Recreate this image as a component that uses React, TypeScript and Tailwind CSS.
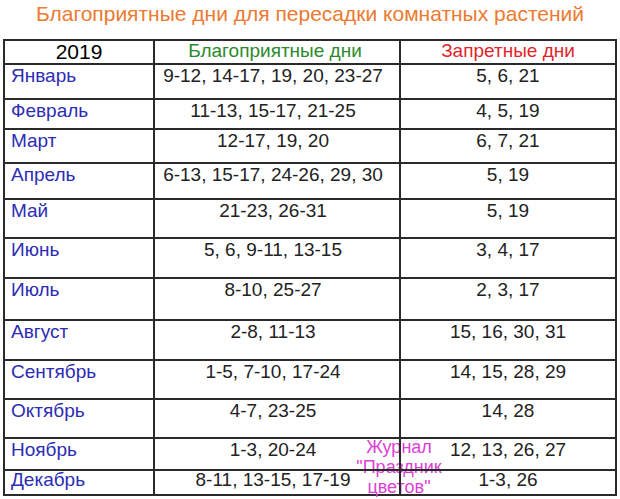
import React from "react";

type Row = { m: string; good: string; bad: string; h: string };

const rows: Row[] = [
  { m: "Январь", good: "9-12, 14-17, 19, 20, 23-27", bad: "5, 6, 21", h: "h-[35px]" },
  { m: "Февраль", good: "11-13, 15-17, 21-25", bad: "4, 5, 19", h: "h-[30px]" },
  { m: "Март", good: "12-17, 19, 20", bad: "6, 7, 21", h: "h-[34px]" },
  { m: "Апрель", good: "6-13, 15-17, 24-26, 29, 30", bad: "5, 19", h: "h-[36px]" },
  { m: "Май", good: "21-23, 26-31", bad: "5, 19", h: "h-[39px]" },
  { m: "Июнь", good: "5, 6, 9-11, 13-15", bad: "3, 4, 17", h: "h-[40px]" },
  { m: "Июль", good: "8-10, 25-27", bad: "2, 3, 17", h: "h-[42px]" },
  { m: "Август", good: "2-8, 11-13", bad: "15, 16, 30, 31", h: "h-[40px]" },
  { m: "Сентябрь", good: "1-5, 7-10, 17-24", bad: "14, 15, 28, 29", h: "h-[39px]" },
  { m: "Октябрь", good: "4-7, 23-25", bad: "14, 28", h: "h-[39px]" },
  { m: "Ноябрь", good: "1-3, 20-24", bad: "12, 13, 26, 27", h: "h-[32px]" },
];

export default function App() {
  return (
    <div
      className="w-[620px] h-[499px] bg-white overflow-hidden"
      style={{ fontFamily: '"Liberation Sans", Arial, sans-serif' }}
    >
      <div className="h-[39px] pt-[2px] text-center text-[21px] leading-[24px] text-[#ec7a30]">
        Благоприятные дни для пересадки комнатных растений
      </div>
      <div className="relative isolate ml-[3px] w-[614px] border-2 border-[#2a2a2a]">
        <div className="flex h-[24px] border-b-2 border-[#2a2a2a]">
          <div className="w-[150px] border-r-2 border-[#2a2a2a] text-center text-[21px] leading-[22px] text-black">
            2019
          </div>
          <div className="w-[246px] border-r-2 border-[#2a2a2a] pr-[4px] text-center text-[19px] leading-[20px] text-[#2b8a2b]">
            Благоприятные дни
          </div>
          <div className="w-[214px] text-center text-[19px] leading-[20px] text-[#e0262a]">
            Запретные дни
          </div>
        </div>
        {rows.map((r) => (
          <div key={r.m} className={`flex ${r.h} border-b-2 border-[#2a2a2a] text-[19px] leading-[22px]`}>
            <div className="w-[150px] border-r-2 border-[#2a2a2a] pl-[6px] text-[#2c2cb4]">{r.m}</div>
            <div className="w-[246px] border-r-2 border-[#2a2a2a] pr-[8px] text-center text-[#222]">{r.good}</div>
            <div className="w-[214px] text-center text-[#222]">{r.bad}</div>
          </div>
        ))}
        <div className="flex h-[23px] text-[19px] leading-[18px]">
          <div className="w-[150px] border-r-2 border-[#2a2a2a] pl-[6px] text-[#2c2cb4]">Декабрь</div>
          <div className="w-[246px] border-r-2 border-[#2a2a2a] pr-[8px] text-center text-[#222]">8-11, 13-15, 17-19</div>
          <div className="w-[214px] text-center text-[#222]">1-3, 26</div>
        </div>
        <div className="absolute -z-10 left-[346px] top-[396px] w-[96px] text-center text-[18px] leading-[20px] text-[#dd3fd6]">
          Журнал
          <br />
          "Праздник
          <br />
          цветов"
        </div>
      </div>
    </div>
  );
}
